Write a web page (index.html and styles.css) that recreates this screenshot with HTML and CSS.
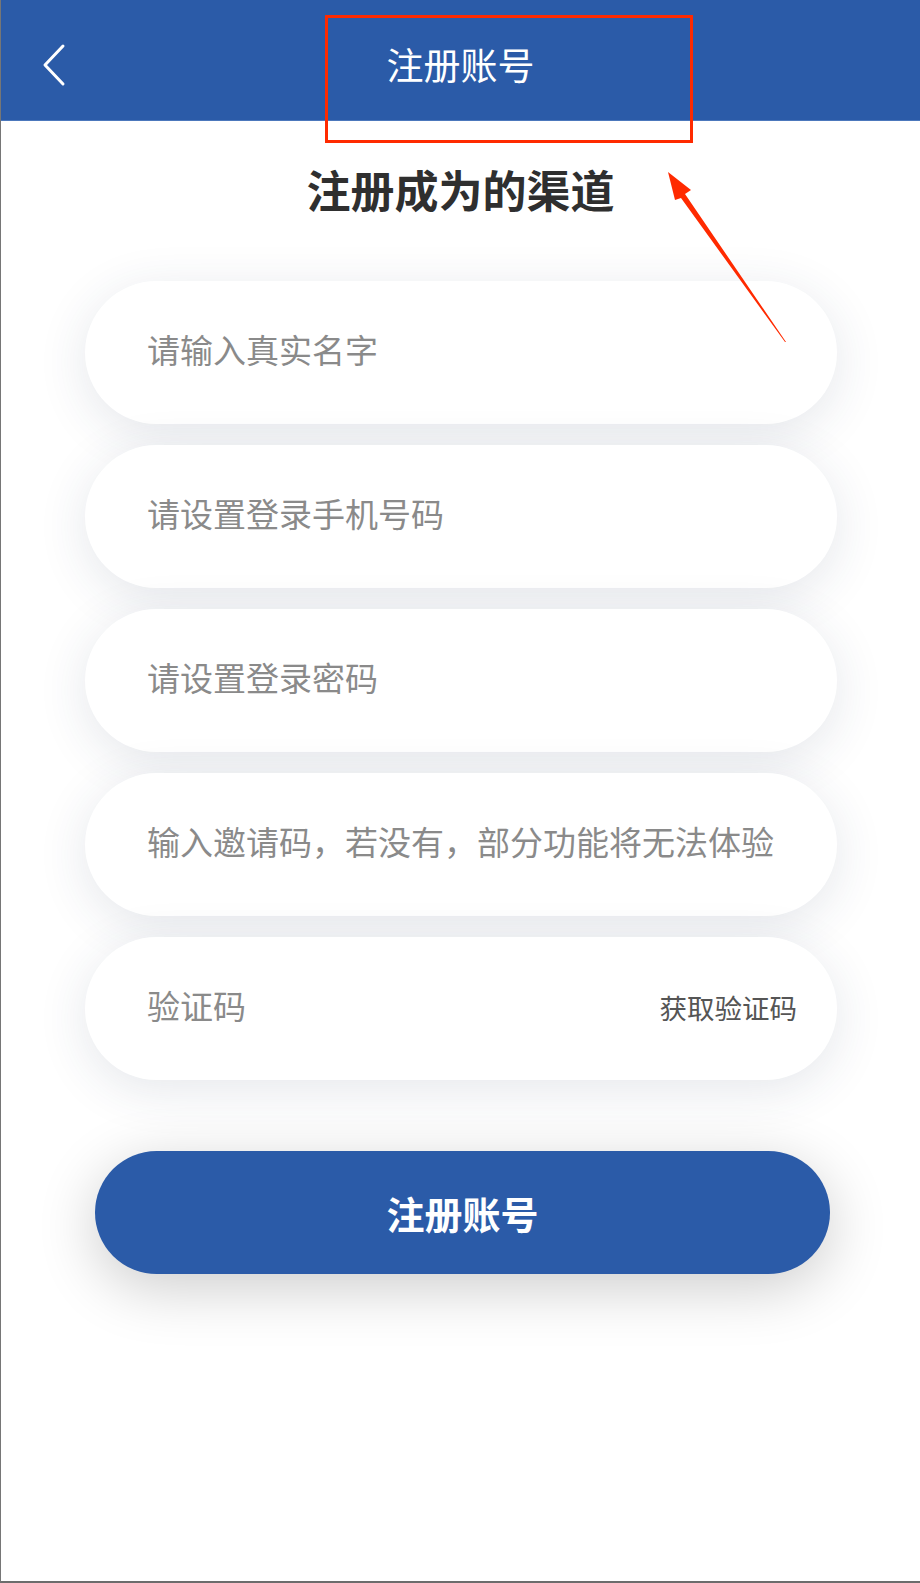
FILE: index.html
```html
<!DOCTYPE html>
<html lang="zh-CN">
<head>
  <meta charset="UTF-8">
  <meta name="viewport" content="width=device-width, initial-scale=1.0">
  <title>注册账号</title>
  <link rel="stylesheet" href="styles.css">
</head>
<body>

  <div class="page">
    <header class="topbar">
      <a class="back" href="#">
        <svg width="30" height="46" viewBox="0 0 30 46">
          <polyline points="22,4 4,23 22,42" fill="none" stroke="#fff" stroke-width="3" stroke-linecap="round" stroke-linejoin="round"/>
        </svg>
      </a>
      <h1>注册账号</h1>
    </header>

    <h2 class="subtitle">注册成为的渠道</h2>

    <form class="reg-form">
      <div class="field"><input type="text" placeholder="请输入真实名字"></div>
      <div class="field"><input type="tel" placeholder="请设置登录手机号码"></div>
      <div class="field"><input type="password" placeholder="请设置登录密码"></div>
      <div class="field"><input type="text" placeholder="输入邀请码，若没有，部分功能将无法体验"></div>
      <div class="field code-field">
        <input type="text" placeholder="验证码">
        <span class="get-code">获取验证码</span>
      </div>
    </form>

    <button class="submit" type="button">注册账号</button>

    <!-- annotation marks -->
    <div class="mark-box"></div>
    <svg class="mark-arrow" width="140" height="190" viewBox="0 0 140 190">
      <polygon points="0,0 23,18 17,22 118,170 117,170 13,26 7,28" fill="#ff2a00"/>
    </svg>
  </div>

</body>
</html>
```

FILE: styles.css
```css
/* General Styles */
body {
  margin: 0;
  padding: 0;
  font-family: "Noto Sans CJK SC", "Noto Sans", sans-serif;
  background: #fff;
}

.page {
  position: relative;
  width: 920px;
  height: 1583px;
  box-sizing: border-box;
  border-left: 1px solid #767676;
  border-bottom: 2px solid #6c6c6c;
  overflow: hidden;
}

/* Top bar */
.topbar {
  height: 121px;
  box-sizing: border-box;
  padding-top: 8px;
  background: #2b5ba8;
  border-bottom: 1px solid #4c78bc;
  display: flex;
  align-items: center;
  justify-content: center;
  position: relative;
}

.back {
  position: absolute;
  left: 40px;
  top: 42px;
  display: flex;
}

.topbar h1 {
  margin: 0;
  font-size: 37px;
  font-weight: 400;
  color: #fff;
  line-height: 50px;
}

.subtitle {
  margin: 38px 0 0;
  text-align: center;
  font-size: 44px;
  font-weight: 700;
  line-height: 60px;
  color: #2f2f2f;
}

/* Form */
.reg-form {
  margin: 62px 83px 0 84px;
  display: flex;
  flex-direction: column;
  gap: 21px;
}

.field {
  height: 143px;
  box-sizing: border-box;
  border-radius: 72px;
  background: #fff;
  box-shadow: 0 10px 50px rgba(40, 60, 90, 0.12);
  display: flex;
  align-items: center;
  padding: 0 40px 7px 62px;
}

.field input {
  flex: 1;
  min-width: 0;
  border: none;
  outline: none;
  background: transparent;
  padding: 0;
  font-family: inherit;
  font-size: 33px;
  color: #333;
}

.field input::placeholder {
  color: #8a8a8a;
}

.get-code {
  font-size: 27.5px;
  color: #555;
  padding-top: 4px;
}

/* Button */
.submit {
  display: block;
  margin: 71px 91px 0 94px;
  width: 735px;
  height: 123px;
  border: none;
  border-radius: 62px;
  background: #2b5ba8;
  color: #fff;
  font-family: inherit;
  font-size: 38px;
  font-weight: 700;
  box-shadow: 0 14px 60px rgba(0, 0, 0, 0.2);
  cursor: pointer;
}

/* Annotation marks */
.mark-box {
  position: absolute;
  left: 324px;
  top: 15px;
  width: 368px;
  height: 128px;
  box-sizing: border-box;
  border: 3px solid #ff2a00;
}

.mark-arrow {
  position: absolute;
  left: 667px;
  top: 172px;
}
```
